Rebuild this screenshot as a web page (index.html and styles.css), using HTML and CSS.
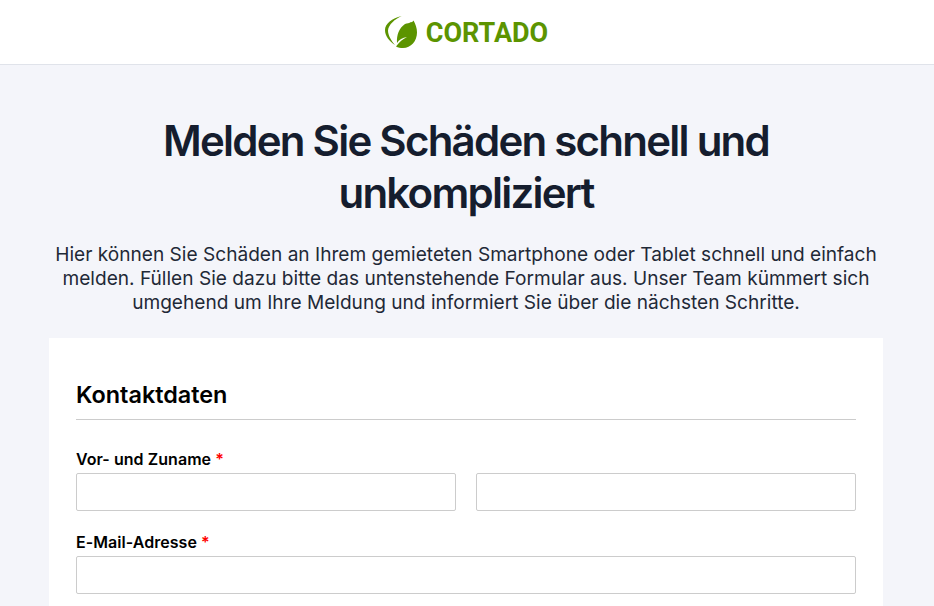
FILE: index.html
```html
<!DOCTYPE html>
<html lang="de">
<head>
<meta charset="utf-8">
<title>Cortado</title>
<link rel="stylesheet" href="styles.css">
</head>
<body>
<header class="topbar">
  <div class="logo">
    <svg class="logo-mark" width="34" height="34" viewBox="0 0 34 34">
      <path fill="#5c9400" d="M29.5 5.5 C31.5 9 33 13 33 17.5 C33 26 27 33 19 33 C16.5 33 14 32.5 12 31.5 C15 27 19 24 23 22 C18.5 22.5 15 25 13 28 C12.5 20 15 13 21 9 C23 8 25.5 8.5 27 7 C28 7.5 29 6.5 29.5 5.5 Z"/>
      <path fill="#5c9400" d="M17.7 1 C8 3 1 9 1 15 C1 21 5 26 11 30 C7 25.500 4 20 4 15.500 C4.500 9.500 11 4 17.7 1 Z"/>
    </svg>
    <span class="logo-text">CORTADO</span>
  </div>
</header>
<main class="page">
  <h1 class="title">Melden Sie Schäden schnell und unkompliziert</h1>
  <p class="intro">Hier können Sie Schäden an Ihrem gemieteten Smartphone oder Tablet schnell und einfach melden. Füllen Sie dazu bitte das untenstehende Formular aus. Unser Team kümmert sich umgehend um Ihre Meldung und informiert Sie über die nächsten Schritte.</p>
  <form class="card">
    <h2 class="section-title">Kontaktdaten</h2>
    <div class="field">
      <label class="label">Vor- und Zuname <span class="req">*</span></label>
      <div class="two-col">
        <input class="input" type="text" aria-label="Vorname">
        <input class="input" type="text" aria-label="Zuname">
      </div>
    </div>
    <div class="field">
      <label class="label">E-Mail-Adresse <span class="req">*</span></label>
      <input class="input" type="email" aria-label="E-Mail-Adresse">
    </div>
  </form>
</main>
</body>
</html>
```
FILE: styles.css
```css
* { box-sizing: border-box; }
html, body { margin: 0; padding: 0; height: 100%; overflow: hidden; }
body {
  background: #f4f5fa;
  font-family: Inter, "Liberation Sans", sans-serif;
  color: #000;
}
.topbar {
  height: 65px;
  background: #fff;
  border-bottom: 1px solid #e0e3ea;
  display: flex;
  align-items: center;
  justify-content: center;
}
.logo { display: flex; align-items: center; gap: 8px; padding-right: 2px; }
.logo-mark { display: block; }
.logo-text {
  font-family: Roboto, "Liberation Sans", sans-serif;
  font-weight: 700;
  font-size: 27px;
  line-height: 32px;
  padding-top: 2px;
  color: #5c9400;
}
.page {
  width: 834px;
  margin-left: 49px;
  padding-top: 50px;
}
.title {
  margin: 0 auto;
  width: 660px;
  font-size: 42px;
  line-height: 52px;
  font-weight: 600;
  letter-spacing: -1.75px;
  text-align: center;
  color: #151d2e;
}
.intro {
  margin: 23px 0 24px;
  font-size: 19.1px;
  line-height: 24px;
  text-align: center;
  color: #1f2937;
}
.card {
  background: #fff;
  padding: 41px 27px;
}
.section-title {
  margin: 0 0 29px;
  padding-bottom: 8px;
  border-bottom: 1px solid #ccc;
  font-size: 23.4px;
  line-height: 32px;
  font-weight: 600;
}
.field { margin-bottom: 21px; }
.label {
  display: block;
  font-size: 16px;
  line-height: 20px;
  font-weight: 600;
  letter-spacing: 0.05px;
  margin-bottom: 4px;
}
.req { color: #f00; }
.two-col { display: grid; grid-template-columns: 1fr 1fr; gap: 20px; }
.input {
  display: block;
  width: 100%;
  height: 38px;
  border: 1px solid #ccc;
  border-radius: 2px;
  background: #fff;
}
```
